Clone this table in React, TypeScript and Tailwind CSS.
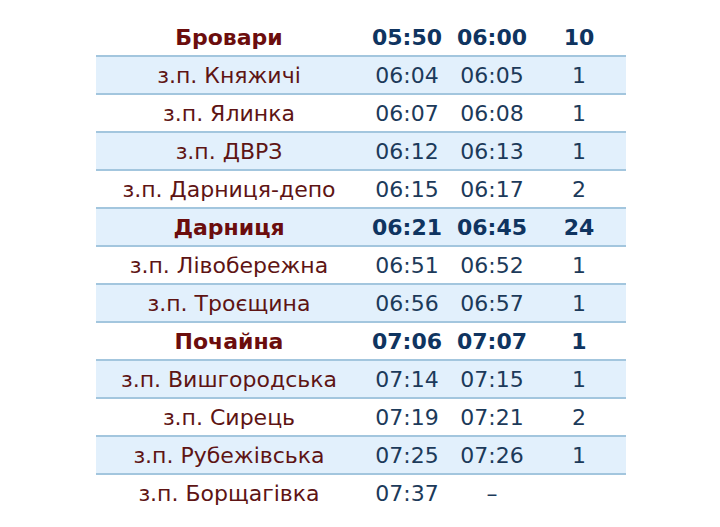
import React from 'react';

interface Stop {
  name: string;
  arrive: string;
  depart: string;
  wait: string;
  main?: boolean;
}

const stops: Stop[] = [
  { name: 'Бровари', arrive: '05:50', depart: '06:00', wait: '10', main: true },
  { name: 'з.п. Княжичі', arrive: '06:04', depart: '06:05', wait: '1' },
  { name: 'з.п. Ялинка', arrive: '06:07', depart: '06:08', wait: '1' },
  { name: 'з.п. ДВРЗ', arrive: '06:12', depart: '06:13', wait: '1' },
  { name: 'з.п. Дарниця-депо', arrive: '06:15', depart: '06:17', wait: '2' },
  { name: 'Дарниця', arrive: '06:21', depart: '06:45', wait: '24', main: true },
  { name: 'з.п. Лівобережна', arrive: '06:51', depart: '06:52', wait: '1' },
  { name: 'з.п. Троєщина', arrive: '06:56', depart: '06:57', wait: '1' },
  { name: 'Почайна', arrive: '07:06', depart: '07:07', wait: '1', main: true },
  { name: 'з.п. Вишгородська', arrive: '07:14', depart: '07:15', wait: '1' },
  { name: 'з.п. Сирець', arrive: '07:19', depart: '07:21', wait: '2' },
  { name: 'з.п. Рубежівська', arrive: '07:25', depart: '07:26', wait: '1' },
  { name: 'з.п. Борщагівка', arrive: '07:37', depart: '–', wait: '' },
];

export default function App() {
  return (
    <div className="w-[720px] h-[527px] bg-white pt-[19px] font-['DejaVu_Sans','Verdana',sans-serif]">
      <div className="ml-[96px] w-[530px] flex flex-col text-[22px]">
        {stops.map((s, i) => {
          const shaded = i % 2 === 1;
          const nameCls = s.main ? 'font-bold text-[#6b0d0d]' : 'text-[#5e1414]';
          const timeCls = s.main ? 'font-bold text-[#0f3460]' : 'text-[#1c3a5a]';
          return (
            <div
              key={s.name}
              className={
                shaded
                  ? 'flex items-center h-[40px] bg-[#e2f0fc] border-y-2 border-[#a3c6de]'
                  : 'flex items-center h-[36px]'
              }
            >
              <div className={`w-[266px] text-center ${nameCls}`}>{s.name}</div>
              <div className={`w-[90px] text-center ${timeCls}`}>{s.arrive}</div>
              <div className={`w-[80px] text-center ${timeCls}`}>{s.depart}</div>
              <div className={`w-[94px] text-center ${timeCls}`}>{s.wait}</div>
            </div>
          );
        })}
      </div>
    </div>
  );
}
